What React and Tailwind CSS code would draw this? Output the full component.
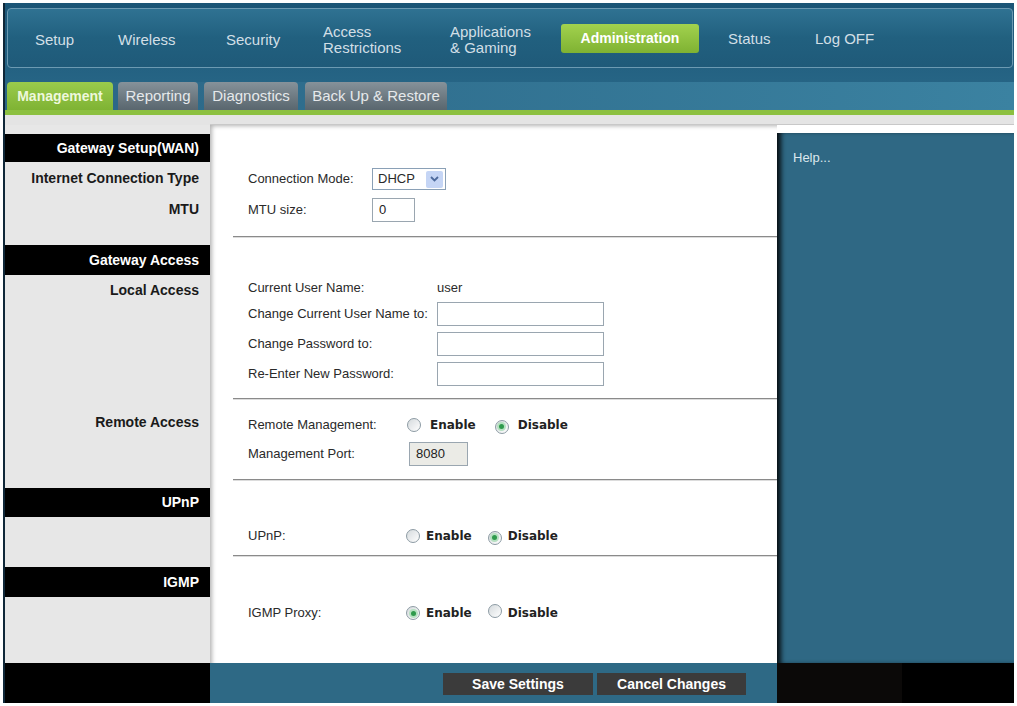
import React from "react";

const font = { fontFamily: '"Liberation Sans", Arial, sans-serif' };

// small radio button in the old XP look
const Radio = ({ checked }) => (
  <span className="inline-flex h-[14px] w-[14px] items-center justify-center rounded-full border border-[#8d9ba4] bg-gradient-to-br from-[#d5dadd] to-white">
    {checked && <span className="h-[5px] w-[5px] rounded-full bg-[#2f9a4c] shadow-[0_0_0_2px_#b5e0c0]" />}
  </span>
);

const Choice = ({ value, gap, spread }) => (
  <div className="flex items-center text-[12px] font-bold text-[#222]" style={{ fontFamily: '"DejaVu Sans", Verdana, sans-serif' }}>
    <Radio checked={value} />
    <span className={gap}>Enable</span>
    <span className={spread}><Radio checked={!value} /></span>
    <span className={gap}>Disable</span>
  </div>
);

const Divider = () => (
  <div className="ml-[23px]">
    <div className="h-px bg-[#8a8a8a]" />
    <div className="h-px bg-[#dcdcdc]" />
  </div>
);

const SideHead = ({ children, h }) => (
  <div className={`${h} flex items-center justify-end bg-black pr-[11px] text-[14px] font-bold text-white`}>
    {children}
  </div>
);

const SideLabel = ({ children, h }) => (
  <div className={`${h} flex items-center justify-end pr-[11px] text-[14px] font-bold text-[#1a1a1a]`}>
    {children}
  </div>
);

const TextBox = ({ w, value, disabled }) => (
  <div
    className={`${w} flex h-[24px] items-center border border-[#9aa6b0] px-[6px] text-[13px] text-[#222] ${
      disabled ? "bg-[#ebebe6]" : "bg-white"
    }`}
  >
    {value}
  </div>
);

const navItems = [
  { label: ["Setup"], w: "w-[83px]" },
  { label: ["Wireless"], w: "w-[108px]" },
  { label: ["Security"], w: "w-[97px]" },
  { label: ["Access", "Restrictions"], w: "w-[127px]" },
  { label: ["Applications", "& Gaming"], w: "w-[111px]" },
];

const tabs = [
  { label: "Reporting", w: "w-[80px]", ml: "ml-[5px]" },
  { label: "Diagnostics", w: "w-[94px]", ml: "ml-[6px]" },
  { label: "Back Up & Restore", w: "w-[142px]", ml: "ml-[7px]" },
];

export default function App() {
  return (
    <div className="h-[706px] w-[1017px] overflow-hidden bg-white pt-[3px] pl-[3px]" style={font}>
      <div className="flex h-[700px] w-[1011px] flex-col border-l-2 border-[#0f2738]">
        {/* top navigation */}
        <div className="h-[107px] bg-gradient-to-b from-[#1b5576] to-[#2a6a8a] pt-[5px]">
          <div className="ml-[2px] mr-[1px] flex h-[60px] items-center rounded-[4px] border border-[#6c9ab2] bg-gradient-to-b from-[#2f7292] via-[#21607f] to-[#1f5a79] pl-[27px] pt-[3px] text-[#d2dfe6]">
            {navItems.map((n) => (
              <div key={n.label[0]} className={`${n.w} text-[15px] leading-[16px]`}>
                {n.label.map((l) => (
                  <div key={l}>{l}</div>
                ))}
              </div>
            ))}
            <div className="w-[167px]">
              <div className="mt-[-2px] flex h-[29px] w-[138px] items-center justify-center rounded-[3px] bg-gradient-to-b from-[#a2d24e] to-[#7fb232] text-[14px] font-bold text-white">
                Administration
              </div>
            </div>
            <div className="w-[87px] text-[15px]">Status</div>
            <div className="text-[15px]">Log OFF</div>
          </div>
          <div className="mt-[14px] flex h-[28px] items-end bg-gradient-to-r from-[#2a6585] to-[#3b82a1] pl-[2px]">
            <div className="flex h-[28px] w-[106px] items-center justify-center rounded-t-[4px] bg-gradient-to-b from-[#9acb4c] to-[#7fb333] text-[14px] font-bold text-[#eef8dc]">
              Management
            </div>
            {tabs.map((t) => (
              <div
                key={t.label}
                className={`${t.w} ${t.ml} flex h-[28px] items-center justify-center rounded-t-[4px] bg-gradient-to-b from-[#86929a] to-[#59666e] text-[15px] text-[#e6e9eb]`}
              >
                {t.label}
              </div>
            ))}
          </div>
        </div>
        <div className="h-[5px] bg-[#8cc040]" />
        <div className="flex h-[10px]">
          <div className="w-[205px] bg-[#e4e4e4]" />
          <div className="flex-1 border-b border-[#c8c8c8] bg-[#e4e4e4]" />
        </div>

        {/* body */}
        <div className="flex h-[538px]">
          {/* left column */}
          <div className="flex w-[205px] flex-col bg-[#e7e7e7]">
            <div className="h-[9px]" />
            <SideHead h="h-[28px]">Gateway Setup(WAN)</SideHead>
            <SideLabel h="h-[32px]">Internet Connection Type</SideLabel>
            <SideLabel h="h-[30px]">MTU</SideLabel>
            <div className="h-[21px]" />
            <SideHead h="h-[30px]">Gateway Access</SideHead>
            <SideLabel h="h-[30px]">Local Access</SideLabel>
            <div className="h-[102px]" />
            <SideLabel h="h-[30px]">Remote Access</SideLabel>
            <div className="h-[51px]" />
            <SideHead h="h-[29px]">UPnP</SideHead>
            <div className="h-[50px]" />
            <SideHead h="h-[30px]">IGMP</SideHead>
          </div>

          {/* main form */}
          <div className="w-[567px] bg-white text-[13px] text-[#2a2a2a] shadow-[inset_4px_3px_4px_-2px_rgba(0,0,0,0.3)]">
            <div className="h-[43px]" />
            <div className="flex h-[22px] items-center pl-[38px]">
              <span className="w-[124px]">Connection Mode:</span>
              <div className="flex h-[22px] w-[74px] items-center justify-between border border-[#8aa0b6] bg-white pl-[5px] pr-[2px]">
                <span>DHCP</span>
                <span className="flex h-[17px] w-[17px] items-center justify-center rounded-[2px] bg-[#c5d5f5]">
                  <svg width="9" height="6" viewBox="0 0 9 6">
                    <path d="M1 1 L4.5 4.5 L8 1" fill="none" stroke="#4d6a9c" strokeWidth="1.8" />
                  </svg>
                </span>
              </div>
            </div>
            <div className="mt-[8px] flex h-[24px] items-center pl-[38px]">
              <span className="w-[124px]">MTU size:</span>
              <TextBox w="w-[43px]" value="0" />
            </div>
            <div className="h-[14px]" />
            <Divider />

            <div className="mt-[40px] flex h-[20px] items-center pl-[38px]">
              <span className="w-[189px]">Current User Name:</span>
              <span>user</span>
            </div>
            <div className="mt-[4px] flex h-[24px] items-center pl-[38px]">
              <span className="w-[189px]">Change Current User Name to:</span>
              <TextBox w="w-[167px]" />
            </div>
            <div className="mt-[6px] flex h-[24px] items-center pl-[38px]">
              <span className="w-[189px]">Change Password to:</span>
              <TextBox w="w-[167px]" />
            </div>
            <div className="mt-[6px] flex h-[24px] items-center pl-[38px]">
              <span className="w-[189px]">Re-Enter New Password:</span>
              <TextBox w="w-[167px]" />
            </div>
            <div className="h-[12px]" />
            <Divider />

            <div className="mt-[15px] flex h-[20px] items-center pl-[38px]">
              <span className="w-[159px]">Remote Management:</span>
              <Choice value={false} gap="ml-[9px]" spread="ml-[19px]" />
            </div>
            <div className="mt-[6px] flex h-[25px] items-center pl-[38px]">
              <span className="w-[161px]">Management Port:</span>
              <TextBox w="w-[59px]" value="8080" disabled />
            </div>
            <div className="h-[13px]" />
            <Divider />

            <div className="mt-[45px] flex h-[20px] items-center pl-[38px]">
              <span className="w-[158px]">UPnP:</span>
              <Choice value={false} gap="ml-[6px]" spread="ml-[16px]" />
            </div>
            <div className="h-[9px]" />
            <Divider />

            <div className="mt-[46px] flex h-[20px] items-center pl-[38px]">
              <span className="w-[158px]">IGMP Proxy:</span>
              <Choice value={true} gap="ml-[6px]" spread="ml-[16px]" />
            </div>
          </div>

          {/* help panel */}
          <div className="flex w-[237px] flex-col bg-white">
            <div className="h-[8px]" />
            <div className="flex-1 bg-[#2f6884] pl-[16px] pt-[15px] text-[13px] text-[#dbe7ee] shadow-[inset_6px_0_5px_-2px_rgba(0,0,0,0.85)]">
              Help...
            </div>
          </div>
        </div>

        {/* bottom bar */}
        <div className="flex h-[40px]">
          <div className="w-[205px] bg-black" />
          <div className="flex w-[567px] items-start bg-[#2e6985] pl-[233px] pt-[10px]">
            <div className="flex h-[22px] w-[150px] items-center justify-center bg-[#3b3b3b] text-[14px] font-bold text-white">
              Save Settings
            </div>
            <div className="ml-[4px] flex h-[22px] w-[149px] items-center justify-center bg-[#3b3b3b] text-[14px] font-bold text-white">
              Cancel Changes
            </div>
          </div>
          <div className="flex flex-1 bg-[#0b0908]">
            <div className="flex-1" />
            <div className="w-[112px] bg-black" />
          </div>
        </div>
      </div>
    </div>
  );
}
